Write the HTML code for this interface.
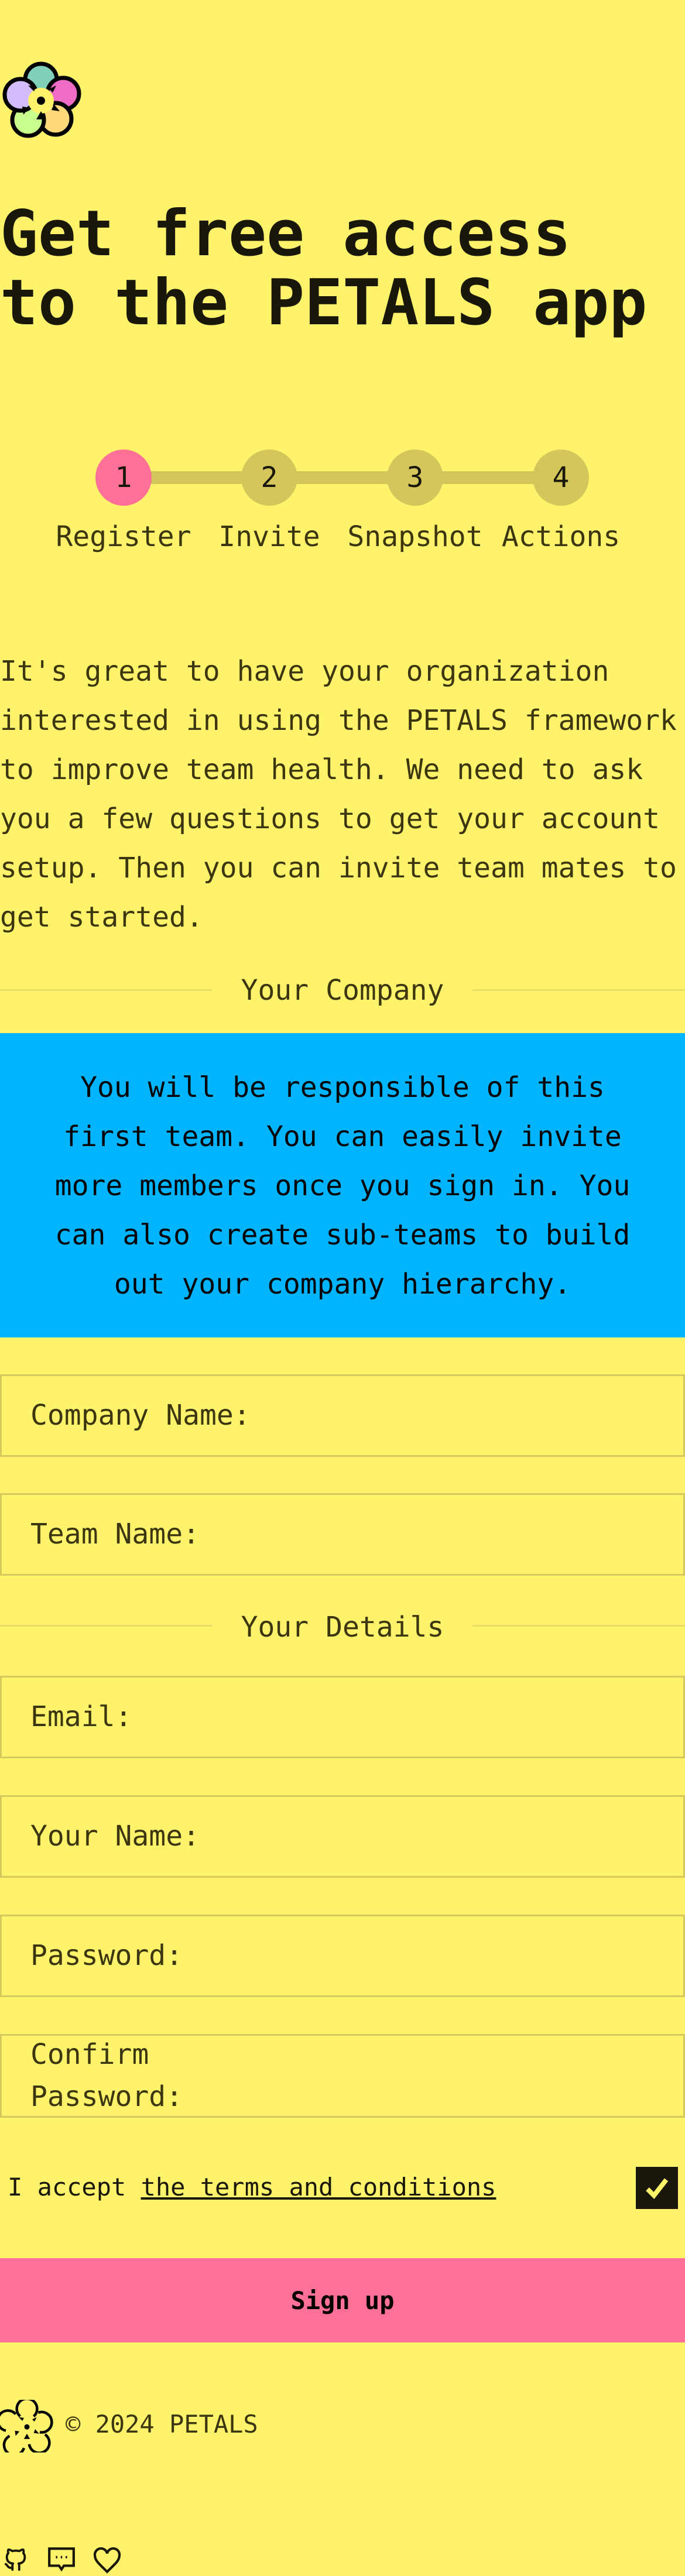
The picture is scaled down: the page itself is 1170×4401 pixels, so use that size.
<!DOCTYPE html>
<html><head><meta charset="utf-8">
<style>
*{margin:0;padding:0;box-sizing:border-box}
html,body{width:1170px;height:4401px;background:#fff36b;overflow:hidden}
body{position:relative;font-family:"DejaVu Sans Mono","Liberation Mono",monospace;color:#3b3510}
.a{position:absolute;white-space:pre}
svg{display:block}
.title{left:0;top:341px;font-size:108px;line-height:118px;font-weight:bold;color:#19160a}
.circ{position:absolute;top:768px;width:96px;height:96px;border-radius:50%;background:#d4c65a;color:#19160a;font-size:48px;display:flex;align-items:center;justify-content:center}
.lbl{position:absolute;top:887px;font-size:48px;line-height:60px;width:260px;text-align:center;color:#3b3510}
.para{left:0;top:1105px;font-size:48px;line-height:84px;width:1170px;white-space:normal}
.sep{position:absolute;height:3px;background:#ebde6a}
.sect{position:absolute;left:0;width:1170px;text-align:center;font-size:48px;line-height:60px}
.blue{position:absolute;left:0;top:1765px;width:1170px;height:520px;background:#00b4ff;color:#000;font-size:48px;line-height:84px;text-align:center;padding:51px 80px 0}
.inp{position:absolute;left:0;width:1170px;height:141px;border:3px solid #d6c85c}
.inp span{position:absolute;left:49px;top:37px;font-size:48px;line-height:60px;color:#3b3510;white-space:nowrap}
</style></head><body>

<svg class="a" style="left:0;top:100px" width="140" height="140" viewBox="0 0 140 140">
<g stroke="#000" stroke-width="7">
<circle cx="70" cy="36" r="27" fill="#80d0bc"/>
<circle cx="108" cy="60" r="27" fill="#ef6cc6"/>
<circle cx="95" cy="103" r="27" fill="#ffd97a"/>
<circle cx="48" cy="105" r="27" fill="#c9ff8c"/>
<circle cx="35" cy="62" r="27" fill="#d4bdff"/>
</g>
<circle cx="70" cy="72" r="22" fill="#fff36b"/>
<g fill="#000">
<circle cx="70" cy="72" r="7"/>
<polygon points="58,56 48,46 62,48"/>
<polygon points="84,52 96,46 90,58"/>
<polygon points="92,78 102,90 88,88"/>
<polygon points="70,90 62,104 78,104"/>
<polygon points="50,84 40,96 38,82"/>
</g>
</svg>

<div class="a title">Get free access
to the PETALS app</div>

<div class="a" style="left:211px;top:805px;width:748px;height:22px;background:#d4c65a"></div>
<div class="circ" style="left:163px;background:#ff7096">1</div>
<div class="circ" style="left:412px">2</div>
<div class="circ" style="left:661px">3</div>
<div class="circ" style="left:910px">4</div>
<div class="lbl" style="left:81px">Register</div>
<div class="lbl" style="left:330px">Invite</div>
<div class="lbl" style="left:579px">Snapshot</div>
<div class="lbl" style="left:828px">Actions</div>

<div class="a para">It's great to have your organization interested in using the PETALS framework to improve team health. We need to ask you a few questions to get your account setup. Then you can invite team mates to get started.</div>

<div class="sep" style="left:0;top:1690px;width:363px"></div>
<div class="sep" style="left:807px;top:1690px;width:363px"></div>
<div class="sect" style="top:1662px">Your Company</div>

<div class="blue">You will be responsible of this first team. You can easily invite more members once you sign in. You can also create sub-teams to build out your company hierarchy.</div>

<div class="inp" style="top:2348px"><span>Company Name:</span></div>
<div class="inp" style="top:2551px"><span>Team Name:</span></div>

<div class="sep" style="left:0;top:2776px;width:363px"></div>
<div class="sep" style="left:807px;top:2776px;width:363px"></div>
<div class="sect" style="top:2750px">Your Details</div>

<div class="inp" style="top:2863px"><span>Email:</span></div>
<div class="inp" style="top:3067px"><span>Your Name:</span></div>
<div class="inp" style="top:3271px"><span>Password:</span></div>
<div class="inp" style="top:3475px;height:143px"><span style="top:-4px;line-height:72px">Confirm<br>Password:</span></div>

<div class="a" style="left:13px;top:3712px;font-size:42px;line-height:50px;color:#19160a">I accept <span style="text-decoration:underline">the terms and conditions</span></div>
<div class="a" style="left:1086px;top:3702px;width:72px;height:72px;background:#19160a"><svg width="72" height="72" viewBox="0 0 72 72"><path d="M20 38 L31 49 L52 22" stroke="#fff36b" stroke-width="8" fill="none"/></svg></div>

<div class="a" style="left:0;top:3858px;width:1170px;height:144px;background:#ff7096;color:#000;font-size:42px;font-weight:bold;display:flex;align-items:center;justify-content:center">Sign up</div>

<svg class="a" style="left:0;top:4100px" width="92" height="90" viewBox="0 0 140 140">
<g stroke="#000" stroke-width="7" fill="none">
<path d="M52 44 A27 27 0 1 1 88 44"/>
<path d="M100 34 A27 27 0 1 1 104 86"/>
<path d="M118 92 A27 27 0 1 1 76 118"/>
<path d="M62 128 A27 27 0 1 1 24 96"/>
<path d="M14 82 A27 27 0 1 1 40 38"/>
</g>
<g fill="#000">
<circle cx="70" cy="72" r="7"/>
<polygon points="58,56 48,46 62,48"/>
<polygon points="84,52 96,46 90,58"/>
<polygon points="92,78 102,90 88,88"/>
<polygon points="70,90 62,104 78,104"/>
<polygon points="50,84 40,96 38,82"/>
</g>
</svg>
<div class="a" style="left:112px;top:4117px;font-size:42px;line-height:50px;color:#3b3510">© 2024 PETALS</div>

<svg class="a" style="left:4px;top:4350px" width="46" height="46" viewBox="0 0 24 24" fill="none" stroke="#19160a" stroke-width="2" stroke-linecap="round" stroke-linejoin="round"><path d="M9 19c-4.3 1.4-4.3-2.5-6-3m12 5v-3.5c0-1 .1-1.4-.5-2 2.8-.3 5.5-1.4 5.5-6a4.6 4.6 0 0 0-1.3-3.2 4.2 4.2 0 0 0-.1-3.2s-1.1-.3-3.5 1.3a12.3 12.3 0 0 0-6.2 0C6.5 2.8 5.4 3.1 5.4 3.1a4.2 4.2 0 0 0-.1 3.2A4.6 4.6 0 0 0 4 9.5c0 4.6 2.7 5.7 5.5 6-.6.6-.6 1.2-.5 2V21"/></svg>
<svg class="a" style="left:80px;top:4350px" width="50" height="46" viewBox="0 0 24 22" fill="none" stroke="#19160a" stroke-width="2"><path d="M2 2 H22 V16 H14 L12 19 L10 16 H2 Z"/><path d="M8 8v2M12 8v2M16 8v2" stroke-width="1.2"/></svg>
<svg class="a" style="left:158px;top:4352px" width="50" height="46" viewBox="0 0 24 22" fill="none" stroke="#19160a" stroke-width="2"><path d="M12 20 C6 14 2 11 2 7 A5 5 0 0 1 12 5 A5 5 0 0 1 22 7 C22 11 18 14 12 20 Z"/></svg>

</body></html>
